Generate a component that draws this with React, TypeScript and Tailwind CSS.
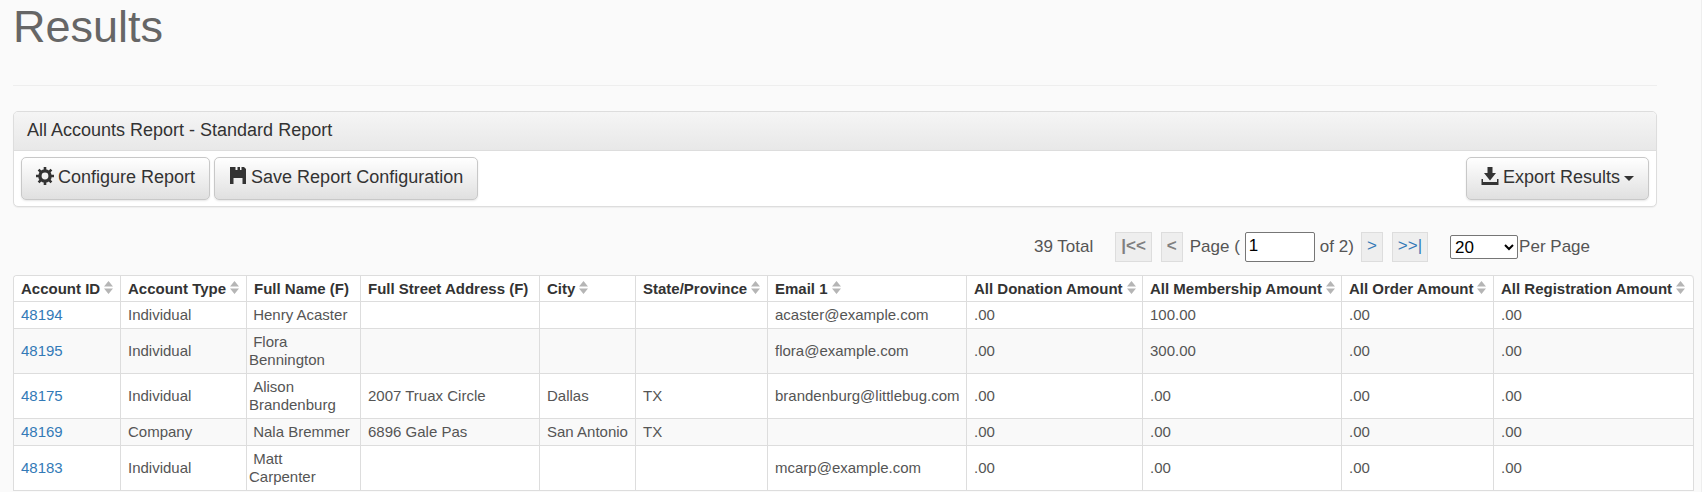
import { useState } from "react"

const columns = [
  { label: "Account ID", sortable: true, width: "w-[107px]" },
  { label: "Account Type", sortable: true, width: "w-[126px]" },
  { label: "Full Name (F)", sortable: false, width: "w-[114px]" },
  { label: "Full Street Address (F)", sortable: false, width: "w-[179px]" },
  { label: "City", sortable: true, width: "w-[96px]" },
  { label: "State/Province", sortable: true, width: "w-[132px]" },
  { label: "Email 1", sortable: true, width: "w-[199px]" },
  { label: "All Donation Amount", sortable: true, width: "w-[176px]" },
  { label: "All Membership Amount", sortable: true, width: "w-[199px]" },
  { label: "All Order Amount", sortable: true, width: "w-[152px]" },
  { label: "All Registration Amount", sortable: true, width: "w-[200px]" },
]

const accounts = [
  { id: "48194", type: "Individual", name: "Henry Acaster", street: "", city: "", state: "", email: "acaster@example.com", amounts: [".00", "100.00", ".00", ".00"] },
  { id: "48195", type: "Individual", name: "Flora Bennington", street: "", city: "", state: "", email: "flora@example.com", amounts: [".00", "300.00", ".00", ".00"] },
  { id: "48175", type: "Individual", name: "Alison Brandenburg", street: "2007 Truax Circle", city: "Dallas", state: "TX", email: "brandenburg@littlebug.com", amounts: [".00", ".00", ".00", ".00"] },
  { id: "48169", type: "Company", name: "Nala Bremmer", street: "6896 Gale Pas", city: "San Antonio", state: "TX", email: "", amounts: [".00", ".00", ".00", ".00"] },
  { id: "48183", type: "Individual", name: "Matt Carpenter", street: "", city: "", state: "", email: "mcarp@example.com", amounts: [".00", ".00", ".00", ".00"] },
]

const toolbarButton =
  "flex h-[43px] cursor-pointer items-center gap-1 rounded-[5px] border border-[#c8c8c8] bg-linear-to-b from-white to-[#e0e0e0] px-[14px] pb-[3px] text-lg text-[#333] shadow-[0_1px_2px_rgba(0,0,0,0.1)]"

const pagerLink = "flex h-[30px] items-center border border-[#ddd] bg-[#eee] px-[5px] pb-[2px]"

function GearIcon() {
  return (
    <svg className="mb-[3px] size-[18px]" viewBox="0 0 18 18" aria-hidden="true">
      <g fill="none" stroke="#333">
        <circle cx="9" cy="9" r="5.1" strokeWidth="3.4" />
        <path d="M9 0v3M9 15v3M0 9h3M15 9h3" strokeWidth="2.6" />
        <path d="M2.6 2.6l2.2 2.2M13.2 13.2l2.2 2.2M15.4 2.6l-2.2 2.2M4.8 13.2l-2.2 2.2" strokeWidth="2.6" />
      </g>
    </svg>
  )
}

function SaveIcon() {
  return (
    <svg className="mb-[3px] size-[18px]" viewBox="0 0 18 18" fill="#333" aria-hidden="true">
      <path d="M1 0h5.5v3h2V0H11v3h1.5V0H15l2 2v15h-3.5v-6h-9v6H1z" />
    </svg>
  )
}

function DownloadIcon() {
  return (
    <svg className="mb-[3px] size-[18px]" viewBox="0 0 18 18" fill="#333" aria-hidden="true">
      <path d="M6.5 0h5v6H15l-6 7.5L3 6h3.5z" />
      <path d="M.5 12h1.5v3h14v-3h1.5v6H.5z" />
    </svg>
  )
}

function SortIcon() {
  return (
    <svg className="mb-[3px] h-[13px] w-[9px] shrink-0" viewBox="0 0 9 13" fill="#b5b5b5" aria-hidden="true">
      <path d="M4.5 0L9 5.5H0zM0 7.5h9L4.5 13z" />
    </svg>
  )
}

export default function App() {
  const [page, setPage] = useState("1")
  const [perPage, setPerPage] = useState("20")

  return (
    <div className="min-h-screen border-r border-[#eee] bg-[#fafafa] pl-[13px] font-['Liberation_Sans',Arial,sans-serif] text-[#555]">
      <div className="mr-11">
        <header className="border-b border-[#eee] pb-[31px]">
          <h1 className="text-[45px] leading-[54px] text-[#666]">Results</h1>
        </header>

        {/* Report panel */}
        <section className="mt-[25px] rounded-[5px] border border-[#ddd] bg-white shadow-[0_1px_1px_rgba(0,0,0,0.05)]">
          <h2 className="flex h-[39px] items-center rounded-t-[4px] border-b border-[#ddd] bg-linear-to-b from-[#f5f5f5] to-[#e8e8e8] px-[13px] pb-[3px] text-lg text-[#333]">
            All Accounts Report - Standard Report
          </h2>
          <div className="flex items-center gap-1 px-[7px] py-[6px]">
            <button type="button" className={toolbarButton}>
              <GearIcon />
              Configure Report
            </button>
            <button type="button" className={toolbarButton}>
              <SaveIcon />
              Save Report Configuration
            </button>
            <button type="button" className={`${toolbarButton} ml-auto`}>
              <DownloadIcon />
              Export Results
              <svg className="mt-[3px] h-[5px] w-[10px]" viewBox="0 0 10 5" fill="#333" aria-hidden="true">
                <path d="M0 0h10L5 5z" />
              </svg>
            </button>
          </div>
        </section>

        {/* Pager */}
        <nav className="mt-[25px] mr-[67px] flex items-center justify-end text-[17px]" aria-label="Pagination">
          <span>39 Total</span>
          <span className={`${pagerLink} ml-[22px] font-bold text-[#808080]`}>|&lt;&lt;</span>
          <span className={`${pagerLink} ml-[9px] font-bold text-[#808080]`}>&lt;</span>
          <label htmlFor="page" className="ml-[7px]">Page (</label>
          <input
            id="page"
            type="text"
            value={page}
            onChange={(e) => setPage(e.target.value)}
            className="mx-[5px] h-[30px] w-[70px] rounded-[2px] border border-[#767676] bg-white px-[3px] pb-[2px] text-black"
          />
          <span>of 2)</span>
          <a href="#next" className={`${pagerLink} ml-[7px] text-[#337ab7]`}>&gt;</a>
          <a href="#last" className={`${pagerLink} ml-[9px] text-[#337ab7]`}>&gt;&gt;|</a>
          <select
            id="perPage"
            value={perPage}
            onChange={(e) => setPerPage(e.target.value)}
            className="mr-[1px] ml-[22px] h-6 w-[68px] rounded-[2px] border border-[#767676] bg-white text-black"
          >
            <option>20</option>
            <option>50</option>
            <option>100</option>
          </select>
          <label htmlFor="perPage">Per Page</label>
        </nav>
      </div>

      {/* Results table */}
      <div className="mt-[13px] mr-[7px] rounded-t-[4px] border-t border-l border-[#ddd]">
        <table className="w-full table-fixed border-separate border-spacing-0 text-[15px] leading-[18px]">
          <thead>
            <tr className="text-left text-[#333]">
              {columns.map((col) => (
                <th key={col.label} className={`${col.width} h-[26px] border-r border-b border-[#ddd] bg-white pl-[7px] font-bold whitespace-nowrap first:rounded-tl-[3px] last:rounded-tr-[4px]`}>
                  <span className="flex items-center gap-1">
                    {col.label}
                    {col.sortable && <SortIcon />}
                  </span>
                </th>
              ))}
            </tr>
          </thead>
          <tbody className="[&_td]:border-r [&_td]:border-b [&_td]:border-[#ddd] [&_td]:py-1 [&_td]:pl-[7px] [&>tr]:bg-white [&>tr:nth-child(even)]:bg-[#f9f9f9]">
            {accounts.map((account) => (
              <tr key={account.id}>
                <td>
                  <a href={`#${account.id}`} className="text-[#337ab7]">{account.id}</a>
                </td>
                <td>{account.type}</td>
                <td className="pr-[7px] pl-[2px]!">&nbsp;{account.name}</td>
                <td>{account.street}</td>
                <td>{account.city}</td>
                <td>{account.state}</td>
                <td>{account.email}</td>
                {account.amounts.map((amount, i) => (
                  <td key={i}>{amount}</td>
                ))}
              </tr>
            ))}
          </tbody>
        </table>
      </div>
    </div>
  )
}
